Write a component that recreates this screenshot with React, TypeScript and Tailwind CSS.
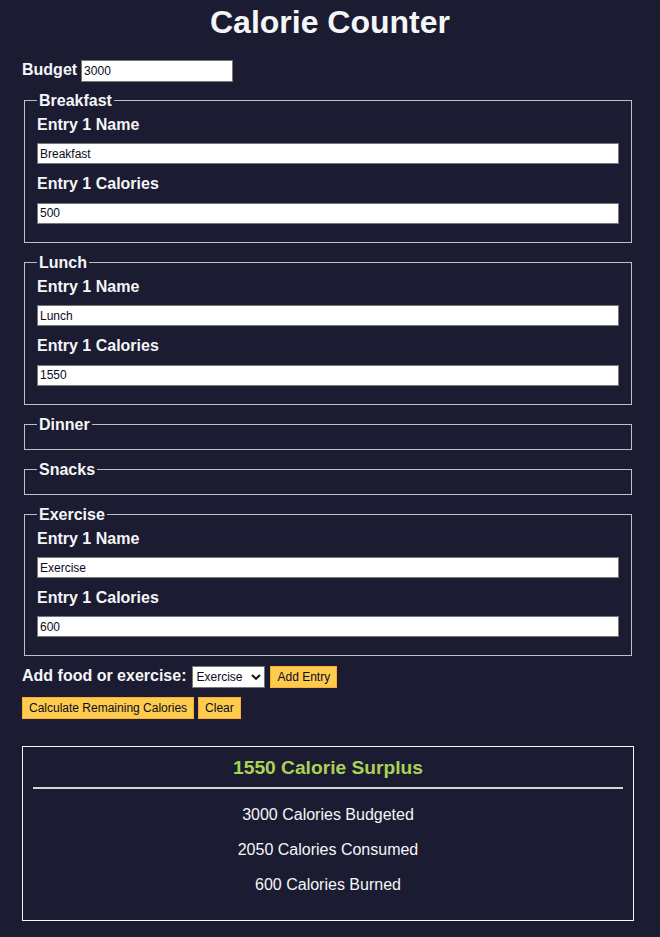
import React from "react";

type Entry = { name: string; calories: string };
type Section = { title: string; entries: Entry[] };

const sections: Section[] = [
  { title: "Breakfast", entries: [{ name: "Breakfast", calories: "500" }] },
  { title: "Lunch", entries: [{ name: "Lunch", calories: "1550" }] },
  { title: "Dinner", entries: [] },
  { title: "Snacks", entries: [] },
  { title: "Exercise", entries: [{ name: "Exercise", calories: "600" }] },
];

const inputCls =
  "block w-full h-[21px] border border-[#767676] bg-white px-[2px] text-[12px] leading-[15px] text-[#0a0a23] outline-none";
const labelCls = "block text-[16px] font-bold leading-[18.4px] pt-[1px] mb-[9px]";
const btnCls =
  "h-[22px] border border-[#feac32] bg-[#fecc4c] px-[6px] text-[12px] leading-[14px] text-[#0a0a23] whitespace-nowrap";

export default function App() {
  return (
    <div
      className="min-h-[937px] w-full bg-[#1b1b32] text-[#f5f6f7] overflow-hidden"
      style={{ fontFamily: '"Liberation Sans", Arial, Helvetica, sans-serif' }}
    >
      <h1 className="pt-[4px] text-center text-[32px] font-bold leading-[37px]">
        Calorie Counter
      </h1>
      <div className="ml-[22px] w-[612px]">
        <div className="mt-[19px] flex items-start gap-[4px]">
          <label className="pt-[1px] text-[16px] font-bold leading-[18.4px]">Budget</label>
          <input
            defaultValue="3000"
            className="h-[22px] w-[152px] border border-[#767676] bg-white px-[2px] text-[12px] text-[#0a0a23] outline-none"
          />
        </div>
        <div className="mt-[9px]">
          {sections.map((s) => (
            <fieldset
              key={s.title}
              className="mx-[2px] mb-[10px] border border-[#c0c0c0] px-[12px] pt-[4.6px] pb-[10px]"
            >
              <legend className="px-[2px] pt-[1px] text-[16px] font-bold leading-[18.4px]">
                {s.title}
              </legend>
              {s.entries.map((e, i) => (
                <div key={i} className="flex flex-col">
                  <label className={labelCls}>Entry {i + 1} Name</label>
                  <input defaultValue={e.name} className={inputCls + " mb-[10px]"} />
                  <label className={labelCls}>Entry {i + 1} Calories</label>
                  <input defaultValue={e.calories} className={inputCls + " mb-[8px]"} />
                </div>
              ))}
            </fieldset>
          ))}
        </div>
        <div className="flex items-start">
          <label className="pt-[1px] text-[16px] font-bold leading-[18.4px]">
            Add food or exercise:
          </label>
          <div className="relative ml-[6px] h-[22px] w-[73px]">
            <select
              defaultValue="exercise"
              className="block h-[22px] w-[73px] appearance-none border border-[#767676] bg-white pl-[3px] text-[12px] text-[#0a0a23] outline-none"
            >
              <option value="breakfast">Breakfast</option>
              <option value="lunch">Lunch</option>
              <option value="dinner">Dinner</option>
              <option value="snacks">Snacks</option>
              <option value="exercise">Exercise</option>
            </select>
            <svg
              className="pointer-events-none absolute left-[59px] top-[8px]"
              width="10"
              height="6"
              viewBox="0 0 10 6"
            >
              <path d="M1 1 L5 4.8 L9 1" fill="none" stroke="#111" strokeWidth="2" />
            </svg>
          </div>
          <button className={btnCls + " ml-[5px]"}>Add Entry</button>
        </div>
        <div className="mt-[9px] flex gap-[4px]">
          <button className={btnCls}>Calculate Remaining Calories</button>
          <button className={btnCls}>Clear</button>
        </div>
        <div className="mt-[27px] border border-[#f5f6f7] p-[10px] text-center">
          <div className="text-[19.2px] font-bold leading-[22px] text-[#acd157]">
            1550 Calorie Surplus
          </div>
          <hr className="mt-[8px] border-t-2 border-[#d4d4d4]" />
          <p className="mt-[16px] text-[16px] leading-[19px]">3000 Calories Budgeted</p>
          <p className="mt-[16px] text-[16px] leading-[19px]">2050 Calories Consumed</p>
          <p className="mt-[16px] mb-[16px] text-[16px] leading-[19px]">600 Calories Burned</p>
        </div>
      </div>
    </div>
  );
}
